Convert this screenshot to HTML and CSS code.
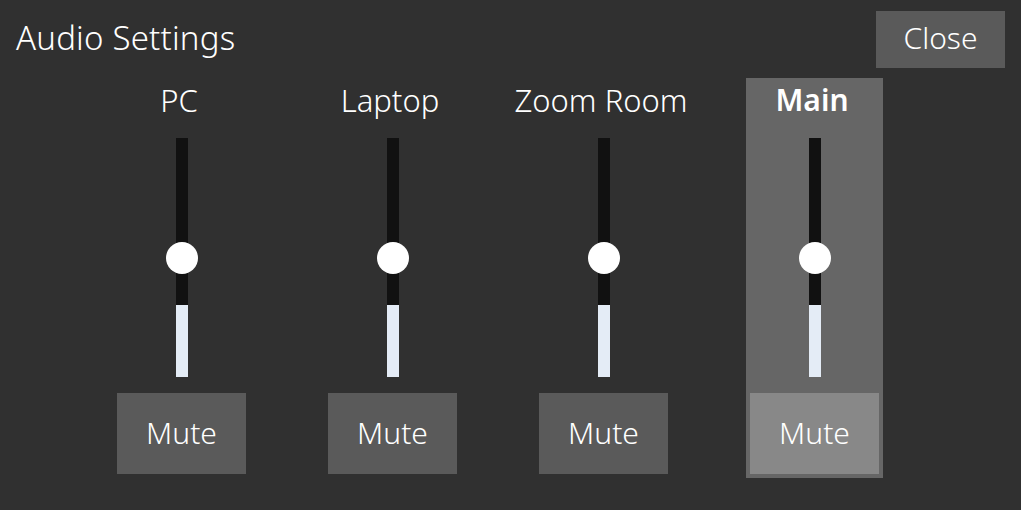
FILE: index.html
```html
<html lang="en">
<head>
  <meta charset="UTF-8">
  <meta name="viewport" content="width=device-width, initial-scale=1.0">
  <title>Audio Settings</title>
  <link rel="stylesheet" href="styles.css">
</head>

<body>
  <div class="header">
    <h1>Audio Settings</h1>
    <button class="btn close-btn">Close</button>
  </div>

  <div class="mixer">
    <div class="channel">
      <div class="channel-name">PC</div>
      <div class="slider">
        <div class="fill" style="height: 30%;"></div>
        <div class="knob" style="top: 50%;"></div>
      </div>
      <button class="btn mute-btn">Mute</button>
    </div>

    <div class="channel">
      <div class="channel-name">Laptop</div>
      <div class="slider">
        <div class="fill" style="height: 30%;"></div>
        <div class="knob" style="top: 50%;"></div>
      </div>
      <button class="btn mute-btn">Mute</button>
    </div>

    <div class="channel">
      <div class="channel-name">Zoom Room</div>
      <div class="slider">
        <div class="fill" style="height: 30%;"></div>
        <div class="knob" style="top: 50%;"></div>
      </div>
      <button class="btn mute-btn">Mute</button>
    </div>

    <div class="channel selected">
      <div class="channel-name">Main</div>
      <div class="slider">
        <div class="fill" style="height: 30%;"></div>
        <div class="knob" style="top: 50%;"></div>
      </div>
      <button class="btn mute-btn">Mute</button>
    </div>
  </div>
</body>
</html>
```

FILE: styles.css
```css
body {
  margin: 0;
  padding: 0;
  background-color: #303030;
  color: #fff;
  font-family: "Noto Sans", "Open Sans", sans-serif;
  font-weight: 300;
}

.header {
  display: flex;
  justify-content: space-between;
  align-items: flex-start;
  padding: 11px 16px 0 16px;
}

h1 {
  margin: 0;
  font-size: 33px;
  font-weight: 300;
  line-height: 54px;
  letter-spacing: 0.2px;
}

.btn {
  border: none;
  background-color: #5a5a5a;
  color: #fff;
  font-family: inherit;
  font-weight: 300;
  font-size: 30px;
  padding: 0 0 3px 0;
  cursor: pointer;
}

.close-btn {
  width: 129px;
  height: 57px;
  padding-bottom: 5px;
}

.mixer {
  display: grid;
  grid-template-columns: repeat(4, 137px);
  column-gap: 74px;
  padding-left: 113px;
  margin-top: 10px;
}

.channel {
  display: flex;
  flex-direction: column;
  align-items: center;
  padding-bottom: 4px;
}

.channel.selected {
  background-color: #666;
}

.channel-name {
  font-size: 31px;
  line-height: 44px;
  margin: 0 5px 16px 0;
  white-space: nowrap;
}

.selected .channel-name {
  font-weight: 600;
  font-size: 30px;
}

/* Fader */
.slider {
  position: relative;
  width: 12px;
  height: 239px;
  background-color: #111;
  display: flex;
  flex-direction: column;
  justify-content: flex-end;
}

.fill {
  background-color: #e4ecf6;
}

.knob {
  position: absolute;
  left: 50%;
  width: 32px;
  height: 32px;
  margin: -16px 0 0 -16px;
  border-radius: 50%;
  background-color: #fff;
}

.mute-btn {
  width: 129px;
  height: 81px;
  margin-top: 16px;
}

.selected .mute-btn {
  background-color: #888;
}
```
